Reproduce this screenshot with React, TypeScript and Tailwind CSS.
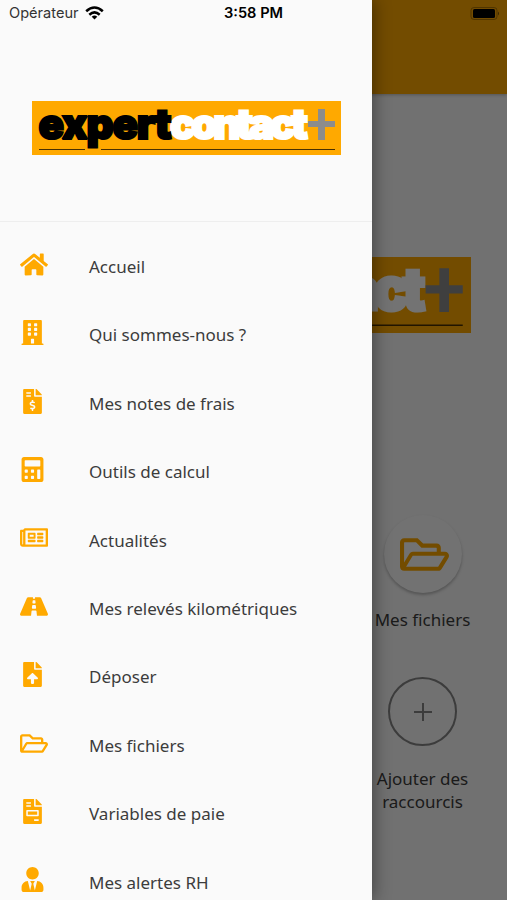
import type { IconType } from "react-icons"
import {
  FaBuilding,
  FaCalculator,
  FaFileInvoice,
  FaFileInvoiceDollar,
  FaFileUpload,
  FaHome,
  FaRegFolderOpen,
  FaRegNewspaper,
  FaRoad,
  FaUserTie
} from "react-icons/fa"

const menu: { icon: IconType; label: string; wide?: boolean }[] = [
  { icon: FaHome, label: "Accueil", wide: true },
  { icon: FaBuilding, label: "Qui sommes-nous ?" },
  { icon: FaFileInvoiceDollar, label: "Mes notes de frais" },
  { icon: FaCalculator, label: "Outils de calcul" },
  { icon: FaRegNewspaper, label: "Actualités", wide: true },
  { icon: FaRoad, label: "Mes relevés kilométriques", wide: true },
  { icon: FaFileUpload, label: "Déposer" },
  { icon: FaRegFolderOpen, label: "Mes fichiers", wide: true },
  { icon: FaFileInvoice, label: "Variables de paie" },
  { icon: FaUserTie, label: "Mes alertes RH" }
]

function Logo({ className }: { className: string }) {
  return (
    <svg viewBox="0 0 309 54" preserveAspectRatio="none" className={className} role="img" aria-label="expertcontact+">
      <rect width="309" height="54" fill="#ffa900" />
      <path d="M7 48.5H53M69 48.5H303" stroke="#4a3000" strokeWidth="1" />
      <g className="font-['Inter',sans-serif] font-black" fontSize="42" strokeWidth="2.2" strokeMiterlimit="2">
        <text x="138" y="38" textLength="138" lengthAdjust="spacing" fill="#fff" stroke="#fff">
          contact
        </text>
        <text x="6.5" y="38" textLength="133" lengthAdjust="spacing" fill="#000" stroke="#000">
          expert
        </text>
      </g>
      <path d="M276 20H303V26H293V39H286V26H276ZM286 8H293V20H286Z" fill="#8c8c8c" />
    </svg>
  )
}

function Battery() {
  return (
    <svg viewBox="0 0 30 14" className="h-3.5 w-[30px]">
      <rect x="1" y="0.5" width="26" height="12" rx="3" fill="none" stroke="#000" strokeOpacity=".3" />
      <rect x="3" y="2" width="22" height="9" rx="1.5" fill="#000" />
      <path d="M28 4.5Q30 6.5 28 8.5Z" fill="#000" fillOpacity=".5" />
    </svg>
  )
}

function Wifi() {
  return (
    <svg viewBox="0 0 19 14" className="h-3.5 w-[19px]" fill="none" stroke="#000" strokeWidth="2.6">
      <path d="M1.2 5.2Q9.5 -2.2 17.8 5.2" />
      <path d="M4.3 8.7Q9.5 4.2 14.7 8.7" />
      <path d="M9.5 13.5L6.7 10.7Q9.5 8.4 12.3 10.7Z" fill="#000" stroke="none" />
    </svg>
  )
}

function Home() {
  return (
    <main className="flex h-full flex-col bg-[#fafafa]">
      <header className="h-[94px] shrink-0 bg-[#ffa900] shadow-[0_1px_3px_rgba(0,0,0,0.25)]" />
      <div className="pt-[163px] pl-[46px]">
        <Logo className="h-[76px] w-[425px]" />
      </div>
      <div className="mt-[182px] grid grid-cols-3">
        <div className="col-start-3 flex flex-col items-center text-center">
          <div className="flex size-[78px] items-center justify-center rounded-full bg-[#fdfdfd] shadow-[0_2px_3px_rgba(0,0,0,0.25)]">
            <FaRegFolderOpen className="ml-1 size-[49px] text-[#ffa900]" />
          </div>
          <p className="mt-[15px] leading-6">Mes fichiers</p>
          <div className="mt-[45px] flex size-[69px] items-center justify-center rounded-full border-2 border-[#858585]">
            <svg viewBox="0 0 18 18" className="size-[18px]" stroke="#858585" strokeWidth="2">
              <path d="M9 0V18M0 9H18" />
            </svg>
          </div>
          <p className="mt-[21px] w-28 leading-[23px]">Ajouter des raccourcis</p>
        </div>
      </div>
    </main>
  )
}

export default function App() {
  return (
    <div className="relative h-[900px] w-[507px] overflow-hidden font-['Noto_Sans',sans-serif] text-[17px] text-[#3c3c3c]">
      <Home />
      <div className="absolute inset-0 bg-black/55" />

      <aside className="absolute inset-y-0 left-0 w-[372px] overflow-hidden bg-[#fafafa] shadow-[2px_0_16px_rgba(0,0,0,0.4)]">
        <div className="flex h-[222px] justify-center border-b border-[#eeeeee] pt-[101px]">
          <Logo className="h-[54px] w-[309px]" />
        </div>
        <nav className="pt-[10.6px]">
          {menu.map(({ icon: Icon, label, wide }) => (
            <a key={label} className="flex h-[68.4px] items-center">
              <span className="ml-5 flex w-[69px] pb-[5px]">
                <Icon className={wide ? "h-[25px] w-[28px]" : "h-[25px] w-[25px]"} color="#ffa900" />
              </span>
              <span>{label}</span>
            </a>
          ))}
        </nav>
      </aside>

      {/* Status bar stays above the drawer */}
      <div className="absolute inset-x-0 top-0 flex h-[27px] items-center justify-between pr-[7px] pl-[9px] font-['Inter',sans-serif] text-[14.6px] text-black">
        <div className="flex w-[215px] items-center gap-1.5">
          <span className="pt-px text-[#333]">Opérateur</span>
          <Wifi />
        </div>
        <span className="grow pt-px font-semibold">3:58 PM</span>
        <Battery />
      </div>
    </div>
  )
}
